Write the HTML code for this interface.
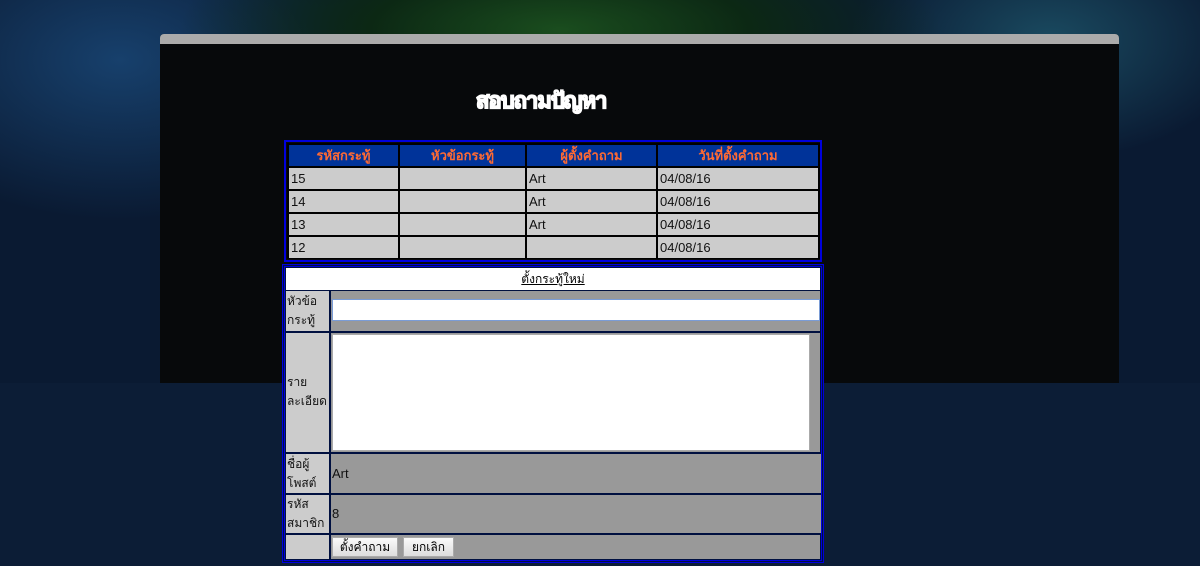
<!DOCTYPE html>
<html><head><meta charset="utf-8"><style>
body{margin:0;width:1200px;height:566px;overflow:hidden;background:#0c1d36;font-family:"Liberation Sans","Noto Sans CJK SC",Tahoma,sans-serif;font-size:13px;position:relative}
.bg{position:absolute;left:0;top:0;width:1200px;height:383px;background:radial-gradient(ellipse 380px 120px at 560px 30px,#1a4d1e 0%,#0c2814 50%,transparent 100%),radial-gradient(ellipse 260px 160px at 120px 60px,#17406c,transparent),radial-gradient(ellipse 200px 120px at 1050px 40px,#1a4a60,transparent),#0a1a32}
.panel{position:absolute;left:160px;top:34px;width:959px;height:349px;background:#07090b;border-radius:4px 4px 0 0}
.panel .bar{height:10px;background:#ababab;border-radius:4px 4px 0 0}
.title{position:absolute;left:476px;top:83px;color:#000;font-size:22px;font-weight:bold;-webkit-text-stroke:1.5px #fff;letter-spacing:-1px;font-family:"Liberation Sans","Noto Sans CJK SC",sans-serif}
.abs{position:absolute}
.c{position:absolute;background:#ccc;color:#111;line-height:21px;padding-left:2px;box-sizing:border-box}
.lb{font-size:12px;padding-left:1px}
.h{position:absolute;background:#003399;color:#ff6a33;font-weight:bold;text-align:center;line-height:21px}
.btn{position:absolute;top:537px;height:20px;background:linear-gradient(#fafafa,#ddd);border:1px solid #aaa;box-sizing:border-box;font-size:12px;line-height:18px;text-align:center;color:#000}
</style></head><body>
<div class="bg"></div>
<div class="panel"><div class="bar"></div></div>
<div class="title">สอบถามปัญหา</div>

<div class="abs" style="left:284px;top:140px;width:538px;height:122px;background:#0a0a0a;border:2px solid #0000dd;box-sizing:border-box"></div>
<div class="abs" style="left:287px;top:143px;width:533px;height:116px;background:#000"></div>
<div class="h" style="left:289px;top:145px;width:109px">รหัสกระทู้</div>
<div class="h" style="left:400px;top:145px;width:125px">หัวข้อกระทู้</div>
<div class="h" style="left:527px;top:145px;width:129px">ผู้ตั้งคำถาม</div>
<div class="h" style="left:658px;top:145px;width:160px">วันที่ตั้งคำถาม</div>

<div class="c" style="left:289px;top:168px;width:109px;height:21px">15</div>
<div class="c" style="left:400px;top:168px;width:125px;height:21px"></div>
<div class="c" style="left:527px;top:168px;width:129px;height:21px">Art</div>
<div class="c" style="left:658px;top:168px;width:160px;height:21px">04/08/16</div>
<div class="c" style="left:289px;top:191px;width:109px;height:21px">14</div>
<div class="c" style="left:400px;top:191px;width:125px;height:21px"></div>
<div class="c" style="left:527px;top:191px;width:129px;height:21px">Art</div>
<div class="c" style="left:658px;top:191px;width:160px;height:21px">04/08/16</div>
<div class="c" style="left:289px;top:214px;width:109px;height:21px">13</div>
<div class="c" style="left:400px;top:214px;width:125px;height:21px"></div>
<div class="c" style="left:527px;top:214px;width:129px;height:21px">Art</div>
<div class="c" style="left:658px;top:214px;width:160px;height:21px">04/08/16</div>
<div class="c" style="left:289px;top:237px;width:109px;height:21px">12</div>
<div class="c" style="left:400px;top:237px;width:125px;height:21px"></div>
<div class="c" style="left:527px;top:237px;width:129px;height:21px"></div>
<div class="c" style="left:658px;top:237px;width:160px;height:21px">04/08/16</div>

<div class="abs" style="left:282px;top:264px;width:542px;height:299px;background:#001040;border:3px double #0000dd;box-sizing:border-box"></div>
<div class="abs" style="left:286px;top:268px;width:534px;height:22px;background:#fff;text-align:center;line-height:22px;text-decoration:underline;color:#000;font-size:12px">ตั้งกระทู้ใหม่</div>

<div class="c lb" style="left:286px;top:291px;width:43px;height:40px;line-height:19px;padding-top:1px">หัวข้อ<br>กระทู้</div>
<div class="abs" style="left:331px;top:291px;width:489px;height:40px;background:#999"></div>
<div class="abs" style="left:332px;top:299px;width:488px;height:22px;background:#fff;border:1px solid #7a9cd6;box-sizing:border-box"></div>

<div class="c lb" style="left:286px;top:333px;width:43px;height:119px;line-height:19px;padding-top:40px">ราย<br>ละเอียด</div>
<div class="abs" style="left:331px;top:333px;width:489px;height:119px;background:#999"></div>
<div class="abs" style="left:332px;top:334px;width:478px;height:117px;background:#fff;border:1px solid #aaa;box-sizing:border-box"></div>

<div class="c lb" style="left:286px;top:454px;width:43px;height:39px;line-height:19px;padding-top:1px">ชื่อผู้<br>โพสต์</div>
<div class="abs" style="left:331px;top:454px;width:489px;height:39px;background:#999;line-height:39px;padding-left:1px;color:#111">Art</div>

<div class="c lb" style="left:286px;top:495px;width:43px;height:38px;line-height:19px">รหัส<br>สมาชิก</div>
<div class="abs" style="left:331px;top:495px;width:489px;height:38px;background:#999;line-height:38px;padding-left:1px;color:#111">8</div>

<div class="c" style="left:286px;top:535px;width:43px;height:24px"></div>
<div class="abs" style="left:331px;top:535px;width:489px;height:24px;background:#999"></div>
<div class="btn" style="left:332px;width:66px">ตั้งคำถาม</div>
<div class="btn" style="left:403px;width:51px">ยกเลิก</div>
</body></html>
